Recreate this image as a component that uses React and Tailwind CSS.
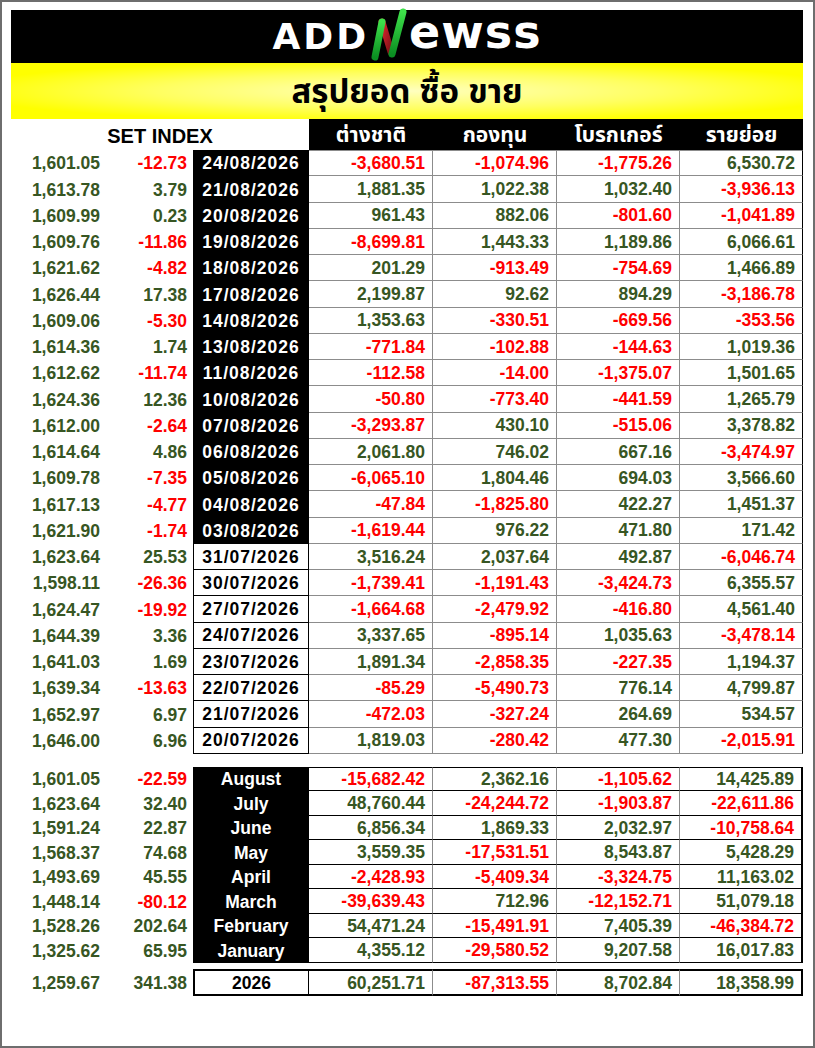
import React from "react";

const COLS = "grid grid-cols-[94px_88px_116px_124px_124px_123px_123px]";

const daily = [
  ["1,601.05", "-12.73", "24/08/2026", "-3,680.51", "-1,074.96", "-1,775.26", "6,530.72"],
  ["1,613.78", "3.79", "21/08/2026", "1,881.35", "1,022.38", "1,032.40", "-3,936.13"],
  ["1,609.99", "0.23", "20/08/2026", "961.43", "882.06", "-801.60", "-1,041.89"],
  ["1,609.76", "-11.86", "19/08/2026", "-8,699.81", "1,443.33", "1,189.86", "6,066.61"],
  ["1,621.62", "-4.82", "18/08/2026", "201.29", "-913.49", "-754.69", "1,466.89"],
  ["1,626.44", "17.38", "17/08/2026", "2,199.87", "92.62", "894.29", "-3,186.78"],
  ["1,609.06", "-5.30", "14/08/2026", "1,353.63", "-330.51", "-669.56", "-353.56"],
  ["1,614.36", "1.74", "13/08/2026", "-771.84", "-102.88", "-144.63", "1,019.36"],
  ["1,612.62", "-11.74", "11/08/2026", "-112.58", "-14.00", "-1,375.07", "1,501.65"],
  ["1,624.36", "12.36", "10/08/2026", "-50.80", "-773.40", "-441.59", "1,265.79"],
  ["1,612.00", "-2.64", "07/08/2026", "-3,293.87", "430.10", "-515.06", "3,378.82"],
  ["1,614.64", "4.86", "06/08/2026", "2,061.80", "746.02", "667.16", "-3,474.97"],
  ["1,609.78", "-7.35", "05/08/2026", "-6,065.10", "1,804.46", "694.03", "3,566.60"],
  ["1,617.13", "-4.77", "04/08/2026", "-47.84", "-1,825.80", "422.27", "1,451.37"],
  ["1,621.90", "-1.74", "03/08/2026", "-1,619.44", "976.22", "471.80", "171.42"],
  ["1,623.64", "25.53", "31/07/2026", "3,516.24", "2,037.64", "492.87", "-6,046.74"],
  ["1,598.11", "-26.36", "30/07/2026", "-1,739.41", "-1,191.43", "-3,424.73", "6,355.57"],
  ["1,624.47", "-19.92", "27/07/2026", "-1,664.68", "-2,479.92", "-416.80", "4,561.40"],
  ["1,644.39", "3.36", "24/07/2026", "3,337.65", "-895.14", "1,035.63", "-3,478.14"],
  ["1,641.03", "1.69", "23/07/2026", "1,891.34", "-2,858.35", "-227.35", "1,194.37"],
  ["1,639.34", "-13.63", "22/07/2026", "-85.29", "-5,490.73", "776.14", "4,799.87"],
  ["1,652.97", "6.97", "21/07/2026", "-472.03", "-327.24", "264.69", "534.57"],
  ["1,646.00", "6.96", "20/07/2026", "1,819.03", "-280.42", "477.30", "-2,015.91"],
];

const monthly = [
  ["1,601.05", "-22.59", "August", "-15,682.42", "2,362.16", "-1,105.62", "14,425.89"],
  ["1,623.64", "32.40", "July", "48,760.44", "-24,244.72", "-1,903.87", "-22,611.86"],
  ["1,591.24", "22.87", "June", "6,856.34", "1,869.33", "2,032.97", "-10,758.64"],
  ["1,568.37", "74.68", "May", "3,559.35", "-17,531.51", "8,543.87", "5,428.29"],
  ["1,493.69", "45.55", "April", "-2,428.93", "-5,409.34", "-3,324.75", "11,163.02"],
  ["1,448.14", "-80.12", "March", "-39,639.43", "712.96", "-12,152.71", "51,079.18"],
  ["1,528.26", "202.64", "February", "54,471.24", "-15,491.91", "7,405.39", "-46,384.72"],
  ["1,325.62", "65.95", "January", "4,355.12", "-29,580.52", "9,207.58", "16,017.83"],
];

const total = ["1,259.67", "341.38", "2026", "60,251.71", "-87,313.55", "8,702.84", "18,358.99"];

const col = (v) => (v.startsWith("-") ? "text-[#ff0000]" : "text-[#375623]");

function Lead({ r }) {
  return (
    <>
      <div className="flex items-center justify-end pr-[5px] pt-[2px] text-[#375623]">{r[0]}</div>
      <div className={`flex items-center justify-end pr-[6px] pt-[2px] ${col(r[1])}`}>{r[1]}</div>
    </>
  );
}

function LogoN() {
  return (
    <svg width="38" height="54" viewBox="0 0 38 54" className="mx-[1px] -mt-[4px]">
      <defs>
        <linearGradient id="gl" x1="0" y1="0" x2="0" y2="1">
          <stop offset="0" stopColor="#3ee04a" />
          <stop offset="1" stopColor="#0b8f22" />
        </linearGradient>
        <linearGradient id="rd" x1="0" y1="0" x2="1" y2="1">
          <stop offset="0" stopColor="#e0262e" />
          <stop offset="1" stopColor="#7a1016" />
        </linearGradient>
      </defs>
      <line x1="12" y1="14" x2="21" y2="44" stroke="url(#rd)" strokeWidth="7" strokeLinecap="round" />
      <line x1="12" y1="14" x2="5" y2="49" stroke="url(#gl)" strokeWidth="7" strokeLinecap="round" />
      <line x1="33" y1="4" x2="22" y2="46" stroke="url(#gl)" strokeWidth="7" strokeLinecap="round" />
    </svg>
  );
}

export default function App() {
  return (
    <div className="w-[815px] h-[1048px] border-2 border-[#6e6e6e] bg-white pt-[8px] pl-[9px] font-['Liberation_Sans','Noto_Sans_Thai','Loma','Tahoma',sans-serif] font-bold text-[17.5px] leading-none">
      <div className="w-[792px]">
        {/* Logo banner */}
        <div className="h-[53px] bg-black flex items-center justify-center text-white">
          <span className="font-['DejaVu_Sans',sans-serif] font-bold text-[36px] tracking-[3px]">ADD</span>
          <LogoN />
          <span className="font-['DejaVu_Sans',sans-serif] font-bold text-[46px] tracking-[1px] -mt-[10px]">ewss</span>
        </div>
        {/* Yellow title */}
        <div className="h-[56px] flex items-center justify-center bg-[radial-gradient(ellipse_at_center,#ffffc0_0%,#ffff60_45%,#ffff00_80%)] text-black text-[33px]">
          สรุปยอด ซื้อ ขาย
        </div>
        {/* Header row */}
        <div className={`${COLS} h-[31px] text-[21px]`}>
          <div className="col-span-3 flex items-center justify-center pt-[2px] text-black text-[20px]">SET INDEX</div>
          <div className="bg-black text-white flex items-center justify-center">ต่างชาติ</div>
          <div className="bg-black text-white flex items-center justify-center">กองทุน</div>
          <div className="bg-black text-white flex items-center justify-center">โบรกเกอร์</div>
          <div className="bg-black text-white flex items-center justify-center">รายย่อย</div>
        </div>
        {/* Daily */}
        <div className={`${COLS} auto-rows-[26.25px]`}>
          {daily.map((r, i) => {
            const july = i >= 15;
            return (
              <React.Fragment key={i}>
                <Lead r={r} />
                <div
                  className={
                    july
                      ? "flex items-center justify-center pt-[2px] bg-white text-black border-x border-b border-black tracking-[1px]"
                      : "flex items-center justify-center pt-[2px] bg-black text-white tracking-[1px]"
                  }
                >
                  {r[2]}
                </div>
                {r.slice(3).map((v, j) => (
                  <div
                    key={j}
                    className={`flex items-center justify-end pr-[7px] pt-[2px] border-b border-r border-b-[#8c8c8c] ${
                      j === 3 ? "border-r-black" : "border-r-[#8c8c8c]"
                    } ${i === 0 ? "border-t border-t-[#8c8c8c]" : ""} ${col(v)}`}
                  >
                    {v}
                  </div>
                ))}
              </React.Fragment>
            );
          })}
        </div>
        {/* Monthly */}
        <div className={`${COLS} auto-rows-[24.5px] mt-[13px]`}>
          {monthly.map((r, i) => (
            <React.Fragment key={i}>
              <Lead r={r} />
              <div className="flex items-center justify-center pt-[2px] bg-black text-white">{r[2]}</div>
              {r.slice(3).map((v, j) => (
                <div
                  key={j}
                  className={`flex items-center justify-end pr-[7px] pt-[2px] border-b border-b-black ${
                    j === 3 ? "border-r-2 border-r-black" : "border-r border-r-[#8c8c8c]"
                  } ${i === 0 ? "border-t border-t-black" : ""} ${col(v)}`}
                >
                  {v}
                </div>
              ))}
            </React.Fragment>
          ))}
        </div>
        {/* Total */}
        <div className={`${COLS} h-[27px] mt-[6px]`}>
          <Lead r={total} />
          <div className="flex items-center justify-center pt-[2px] text-black border-y-2 border-l-2 border-r border-black">{total[2]}</div>
          {total.slice(3).map((v, j) => (
            <div
              key={j}
              className={`flex items-center justify-end pr-[7px] pt-[2px] border-y-2 border-y-black ${
                j === 3 ? "border-r-2 border-r-black" : "border-r border-r-[#8c8c8c]"
              } ${col(v)}`}
            >
              {v}
            </div>
          ))}
        </div>
      </div>
    </div>
  );
}
